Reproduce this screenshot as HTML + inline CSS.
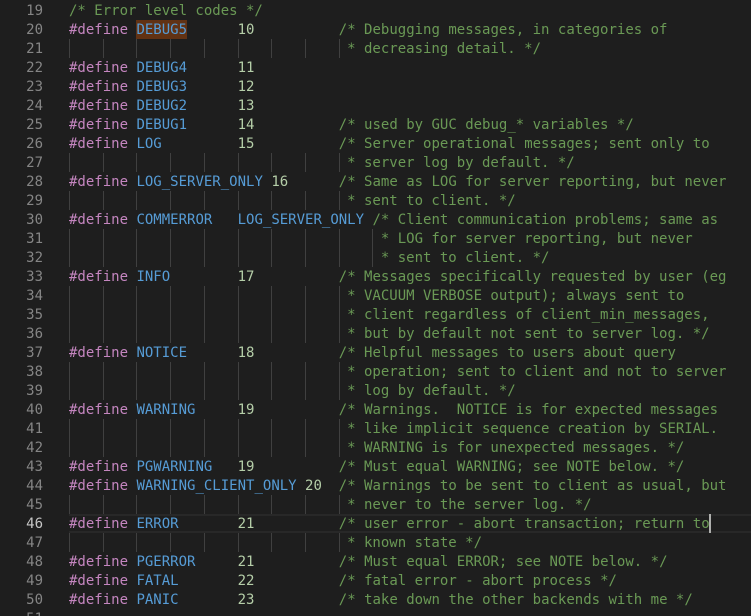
<!DOCTYPE html>
<html><head><meta charset="utf-8">
<style>
html,body{margin:0;padding:0;background:#1e1e1e;width:751px;height:616px;overflow:hidden}
#w{position:relative;width:751px;height:616px;overflow:hidden;font-family:"DejaVu Sans Mono",monospace;font-size:14px;line-height:19px}
.n{position:absolute;left:0;width:43px;text-align:right;color:#858585;height:19px;margin-top:1px}
.l{position:absolute;left:69px;white-space:pre;color:#d4d4d4;height:19px;margin-top:1px}
.a{color:#c6c6c6}
i{font-style:normal}
.k{color:#c586c0}.m{color:#569cd6}.d{color:#b5cea8}.c{color:#6a9955}
.x{position:absolute}
</style></head><body><div id="w">
<div class="x" style="left:69px;top:514px;width:682px;height:15px;border-top:2px solid #282828;border-bottom:2px solid #282828"></div>
<div class="x" style="left:136px;top:20px;width:51px;height:19px;background:#613214"></div>
<div class="n" style="top:1px">19</div><div class="l" style="top:1px"><i class="c">/* Error level codes */</i></div>
<div class="n" style="top:20px">20</div><div class="l" style="top:20px"><i class="k">#define</i> <i class="m">DEBUG5</i>      <i class="d">10</i>          <i class="c">/* Debugging messages, in categories of</i></div>
<div class="n" style="top:39px">21</div><div class="l" style="top:39px"><i class="c">                                 * decreasing detail. */</i></div>
<div class="n" style="top:58px">22</div><div class="l" style="top:58px"><i class="k">#define</i> <i class="m">DEBUG4</i>      <i class="d">11</i></div>
<div class="n" style="top:77px">23</div><div class="l" style="top:77px"><i class="k">#define</i> <i class="m">DEBUG3</i>      <i class="d">12</i></div>
<div class="n" style="top:96px">24</div><div class="l" style="top:96px"><i class="k">#define</i> <i class="m">DEBUG2</i>      <i class="d">13</i></div>
<div class="n" style="top:115px">25</div><div class="l" style="top:115px"><i class="k">#define</i> <i class="m">DEBUG1</i>      <i class="d">14</i>          <i class="c">/* used by GUC debug_* variables */</i></div>
<div class="n" style="top:134px">26</div><div class="l" style="top:134px"><i class="k">#define</i> <i class="m">LOG</i>         <i class="d">15</i>          <i class="c">/* Server operational messages; sent only to</i></div>
<div class="n" style="top:153px">27</div><div class="l" style="top:153px"><i class="c">                                 * server log by default. */</i></div>
<div class="n" style="top:172px">28</div><div class="l" style="top:172px"><i class="k">#define</i> <i class="m">LOG_SERVER_ONLY</i> <i class="d">16</i>      <i class="c">/* Same as LOG for server reporting, but never</i></div>
<div class="n" style="top:191px">29</div><div class="l" style="top:191px"><i class="c">                                 * sent to client. */</i></div>
<div class="n" style="top:210px">30</div><div class="l" style="top:210px"><i class="k">#define</i> <i class="m">COMMERROR</i>   <i class="m">LOG_SERVER_ONLY</i> <i class="c">/* Client communication problems; same as</i></div>
<div class="n" style="top:229px">31</div><div class="l" style="top:229px"><i class="c">                                     * LOG for server reporting, but never</i></div>
<div class="n" style="top:248px">32</div><div class="l" style="top:248px"><i class="c">                                     * sent to client. */</i></div>
<div class="n" style="top:267px">33</div><div class="l" style="top:267px"><i class="k">#define</i> <i class="m">INFO</i>        <i class="d">17</i>          <i class="c">/* Messages specifically requested by user (eg</i></div>
<div class="n" style="top:286px">34</div><div class="l" style="top:286px"><i class="c">                                 * VACUUM VERBOSE output); always sent to</i></div>
<div class="n" style="top:305px">35</div><div class="l" style="top:305px"><i class="c">                                 * client regardless of client_min_messages,</i></div>
<div class="n" style="top:324px">36</div><div class="l" style="top:324px"><i class="c">                                 * but by default not sent to server log. */</i></div>
<div class="n" style="top:343px">37</div><div class="l" style="top:343px"><i class="k">#define</i> <i class="m">NOTICE</i>      <i class="d">18</i>          <i class="c">/* Helpful messages to users about query</i></div>
<div class="n" style="top:362px">38</div><div class="l" style="top:362px"><i class="c">                                 * operation; sent to client and not to server</i></div>
<div class="n" style="top:381px">39</div><div class="l" style="top:381px"><i class="c">                                 * log by default. */</i></div>
<div class="n" style="top:400px">40</div><div class="l" style="top:400px"><i class="k">#define</i> <i class="m">WARNING</i>     <i class="d">19</i>          <i class="c">/* Warnings.  NOTICE is for expected messages</i></div>
<div class="n" style="top:419px">41</div><div class="l" style="top:419px"><i class="c">                                 * like implicit sequence creation by SERIAL.</i></div>
<div class="n" style="top:438px">42</div><div class="l" style="top:438px"><i class="c">                                 * WARNING is for unexpected messages. */</i></div>
<div class="n" style="top:457px">43</div><div class="l" style="top:457px"><i class="k">#define</i> <i class="m">PGWARNING</i>   <i class="d">19</i>          <i class="c">/* Must equal WARNING; see NOTE below. */</i></div>
<div class="n" style="top:476px">44</div><div class="l" style="top:476px"><i class="k">#define</i> <i class="m">WARNING_CLIENT_ONLY</i> <i class="d">20</i>  <i class="c">/* Warnings to be sent to client as usual, but</i></div>
<div class="n" style="top:495px">45</div><div class="l" style="top:495px"><i class="c">                                 * never to the server log. */</i></div>
<div class="n a" style="top:514px">46</div><div class="l" style="top:514px"><i class="k">#define</i> <i class="m">ERROR</i>       <i class="d">21</i>          <i class="c">/* user error - abort transaction; return to</i></div>
<div class="n" style="top:533px">47</div><div class="l" style="top:533px"><i class="c">                                 * known state */</i></div>
<div class="n" style="top:552px">48</div><div class="l" style="top:552px"><i class="k">#define</i> <i class="m">PGERROR</i>     <i class="d">21</i>          <i class="c">/* Must equal ERROR; see NOTE below. */</i></div>
<div class="n" style="top:571px">49</div><div class="l" style="top:571px"><i class="k">#define</i> <i class="m">FATAL</i>       <i class="d">22</i>          <i class="c">/* fatal error - abort process */</i></div>
<div class="n" style="top:590px">50</div><div class="l" style="top:590px"><i class="k">#define</i> <i class="m">PANIC</i>       <i class="d">23</i>          <i class="c">/* take down the other backends with me */</i></div>
<div class="n" style="top:609px">51</div>
<svg class="x" style="left:0;top:0" width="751" height="616"><g stroke="#404040" stroke-width="1" fill="none">
<path d="M69.5 39V58M103.5 39V58M136.5 39V58M170.5 39V58M204.5 39V58M238.5 39V58M271.5 39V58M305.5 39V58M339.5 39V58"/>
<path d="M69.5 153V172M103.5 153V172M136.5 153V172M170.5 153V172M204.5 153V172M238.5 153V172M271.5 153V172M305.5 153V172M339.5 153V172"/>
<path d="M69.5 191V210M103.5 191V210M136.5 191V210M170.5 191V210M204.5 191V210M238.5 191V210M271.5 191V210M305.5 191V210M339.5 191V210"/>
<path d="M69.5 229V267M103.5 229V267M136.5 229V267M170.5 229V267M204.5 229V267M238.5 229V267M271.5 229V267M305.5 229V267M339.5 229V267M372.5 229V267"/>
<path d="M69.5 286V343M103.5 286V343M136.5 286V343M170.5 286V343M204.5 286V343M238.5 286V343M271.5 286V343M305.5 286V343M339.5 286V343"/>
<path d="M69.5 362V400M103.5 362V400M136.5 362V400M170.5 362V400M204.5 362V400M238.5 362V400M271.5 362V400M305.5 362V400M339.5 362V400"/>
<path d="M69.5 419V457M103.5 419V457M136.5 419V457M170.5 419V457M204.5 419V457M238.5 419V457M271.5 419V457M305.5 419V457M339.5 419V457"/>
<path d="M69.5 495V514M103.5 495V514M136.5 495V514M170.5 495V514M204.5 495V514M238.5 495V514M271.5 495V514M305.5 495V514M339.5 495V514"/>
<path d="M69.5 533V552M103.5 533V552M136.5 533V552M170.5 533V552M204.5 533V552M238.5 533V552M271.5 533V552M305.5 533V552M339.5 533V552"/>
</g></svg>
<div class="x" style="left:709px;top:514px;width:2px;height:19px;background:#aeafad"></div>
</div></body></html>
